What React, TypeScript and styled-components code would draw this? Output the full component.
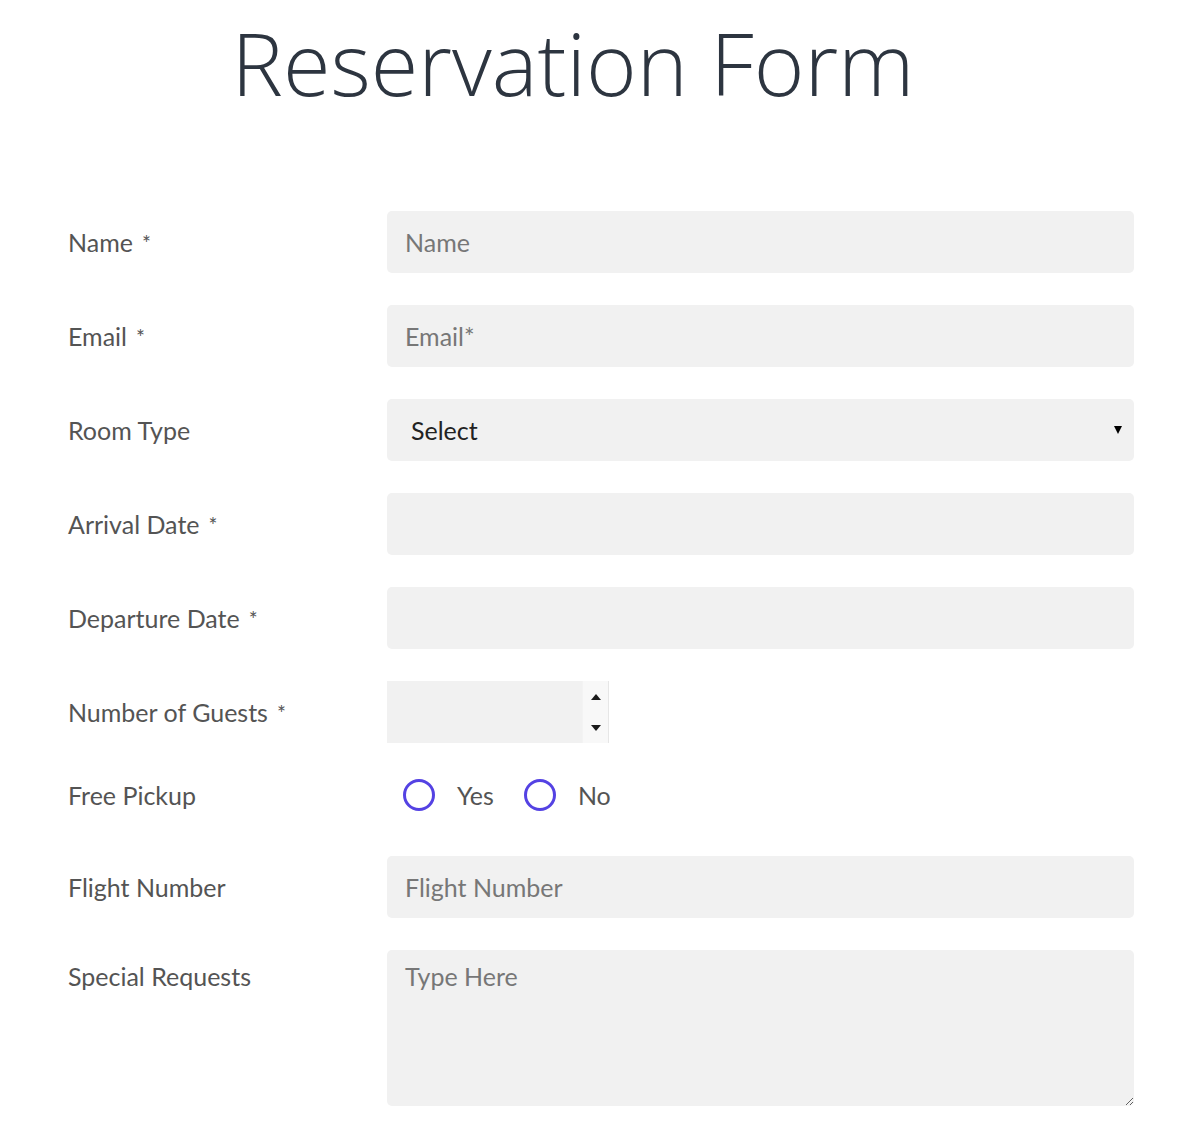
import React from 'react'
import styled, { createGlobalStyle } from 'styled-components'

const GlobalStyle = createGlobalStyle`
    body {
        margin: 0;
        background: #ffffff;
        font-family: Lato, "Open Sans", sans-serif;
    }
`

const Page = styled.div`
    width: 1146px;
    padding-bottom: 21px;
`

const Title = styled.h1`
    margin: 0;
    padding-top: 4px;
    text-align: center;
    font-family: "Open Sans", sans-serif;
    font-weight: 300;
    font-size: 86.5px;
    line-height: 117px;
    color: #2d3540;
`

const Form = styled.form`
    display: grid;
    grid-template-columns: 319px 747px;
    row-gap: 32px;
    padding: 90px 0 0 68px;
`

const Label = styled.label<{ $top?: boolean }>`
    display: flex;
    align-items: ${p => (p.$top ? 'flex-start' : 'center')};
    padding-top: ${p => (p.$top ? '11px' : '0')};
    height: ${p => (p.$top ? 'auto' : '62px')};
    font-size: 25px;
    color: #545454;
`

const Required = styled.span`
    margin-left: 9px;
    font-size: 21px;
    color: #555;
`

const fieldBase = `
    box-sizing: border-box;
    width: 100%;
    border: none;
    outline: none;
    background: #f1f1f1;
    border-radius: 5px;
    font-family: Lato, sans-serif;
    font-size: 25px;
    color: #333;
`

const TextInput = styled.input`
    ${fieldBase}
    height: 62px;
    padding: 0 18px;

    &::placeholder {
        color: #777;
    }
`

const SelectWrap = styled.div`
    position: relative;
`

const Select = styled.select`
    ${fieldBase}
    height: 62px;
    padding: 0 24px;
    appearance: none;
    color: #222;
`

const Triangle = styled.span<{ $up?: boolean }>`
    display: block;
    width: 0;
    height: 0;
    border-left: 5px solid transparent;
    border-right: 5px solid transparent;
    ${p => (p.$up ? 'border-bottom: 6px solid #1a1a1a;' : 'border-top: 6px solid #1a1a1a;')}
`

const SelectArrow = styled(Triangle)`
    position: absolute;
    right: 12px;
    top: 27px;
    border-top-width: 8px;
    border-top-color: #000;
    border-left-width: 4px;
    border-right-width: 4px;
    pointer-events: none;
`

const NumberBox = styled.div`
    display: flex;
    width: 222px;
    height: 62px;
    background: #f1f1f1;
`

const NumberInput = styled.input`
    flex: 1;
    min-width: 0;
    border: none;
    outline: none;
    background: transparent;
    font-family: Lato, sans-serif;
    font-size: 25px;
    padding: 0 18px;
`

const Spinner = styled.div`
    width: 25px;
    display: flex;
    flex-direction: column;
    justify-content: space-around;
    align-items: center;
    background: #f8f8f8;
    border-left: 1px solid #f3f3f3;
    border-right: 1px solid #e6e6e6;
`

const RadioRow = styled.div`
    display: flex;
    align-items: center;
    height: 40px;
    padding-left: 16px;
    margin-bottom: 9px;
`

const RadioOption = styled.label`
    display: flex;
    align-items: center;
    margin-right: 30px;
    font-size: 25px;
    color: #545454;
`

const RadioCircle = styled.span`
    box-sizing: border-box;
    width: 32px;
    height: 32px;
    border-radius: 50%;
    border: 3px solid #5442e3;
    margin-right: 22px;
`

const TextArea = styled.textarea`
    ${fieldBase}
    height: 156px;
    padding: 11px 18px;
    resize: both;
    display: block;

    &::placeholder {
        color: #777;
    }
`

const PickupLabel = styled(Label)`
    height: 40px;
`

export default function App() {
  return (
    <Page>
      <GlobalStyle />
      <Title>Reservation Form</Title>
      <Form>
        <Label>Name<Required>*</Required></Label>
        <TextInput placeholder="Name" />

        <Label>Email<Required>*</Required></Label>
        <TextInput placeholder="Email*" />

        <Label>Room Type</Label>
        <SelectWrap>
          <Select defaultValue="">
            <option value="">Select</option>
          </Select>
          <SelectArrow />
        </SelectWrap>

        <Label>Arrival Date<Required>*</Required></Label>
        <TextInput />

        <Label>Departure Date<Required>*</Required></Label>
        <TextInput />

        <Label>Number of Guests<Required>*</Required></Label>
        <NumberBox>
          <NumberInput />
          <Spinner>
            <Triangle $up />
            <Triangle />
          </Spinner>
        </NumberBox>

        <PickupLabel>Free Pickup</PickupLabel>
        <RadioRow>
          <RadioOption><RadioCircle />Yes</RadioOption>
          <RadioOption><RadioCircle />No</RadioOption>
        </RadioRow>

        <Label>Flight Number</Label>
        <TextInput placeholder="Flight Number" />

        <Label $top>Special Requests</Label>
        <TextArea placeholder="Type Here" />
      </Form>
    </Page>
  )
}
